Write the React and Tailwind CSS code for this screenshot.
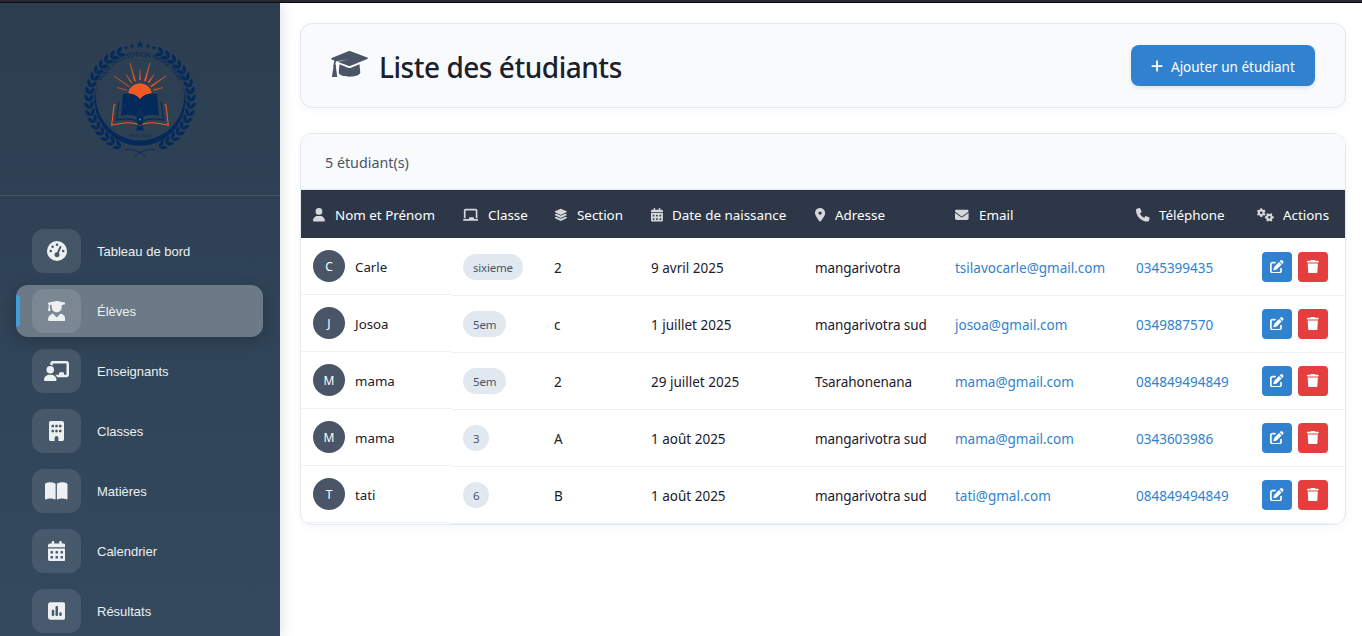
import {
  FaBookOpen, FaBuilding, FaCalendarDays, FaChalkboard, FaChalkboardUser, FaEnvelope, FaGaugeHigh,
  FaGears, FaLayerGroup, FaLocationDot, FaPenToSquare, FaPhone, FaPlus,
  FaSquarePollVertical, FaTrash, FaUser, FaUserGraduate,
} from "react-icons/fa6";

const NAVY = "#042a5c";
const ORANGE = "#f15a24";

const rad = (deg) => (deg * Math.PI) / 180;

function Laurel() {
  const leaf = "M2.5 .3C-.5 .8-4-.8-4.8-4C-1-4.8 2.2-2.8 2.5 .3Z";
  const leaves = [];
  for (let i = 0; i < 17; i++) {
    const a = 24 + i * 8.2;
    const cx = 140 + 51.5 * Math.sin(rad(a));
    const cy = 99.5 - 51.5 * Math.cos(rad(a));
    leaves.push(
      <g key={i} transform={`translate(${cx} ${cy}) rotate(${a})`}>
        <path d={leaf} />
        <path d={leaf} transform="translate(0 .8) scale(1 -1)" />
      </g>
    );
  }
  return <g>{leaves}</g>;
}

function Logo() {
  const star = "M0-3.3L.9-1.1L3.2-1L1.4.5L2 2.8L0 1.5L-2 2.8L-1.4.5L-3.2-1L-.9-1.1Z";
  const rays = [
    [-10, 63, -5, 81], [10, 63, 5, 81], [-26.5, 75.5, -11, 86.5], [26.5, 75.5, 11, 86.5],
    [-14, 74.5, -8.5, 82.5], [14, 74.5, 8.5, 82.5], [-23, 87.5, -14, 90], [23, 87.5, 14, 90],
  ];
  return (
    <svg width="120" height="126" viewBox="80 36 120 126" fill={NAVY}>
      <Laurel />
      <g transform="translate(280 0) scale(-1 1)"><Laurel /></g>
      <path d={star} transform="translate(140 44.6) scale(1.1)" />
      {[[126, 47.8, 0.65], [132, 46, 0.75], [148, 46, 0.75], [154, 47.8, 0.65]].map(([x, y, s]) => (
        <path key={x} d={star} transform={`translate(${x} ${y}) scale(${s})`} />
      ))}
      <path d="M97.5 84A45.5 45.5 0 1 0 182.5 84A44.2 44.2 0 1 1 97.5 84Z" />
      <path d="M124 150C133 149 140 151 146 157M156 150C147 149 140 151 134 157" fill="none" stroke={NAVY} strokeWidth=".9" />
      <path id="seal-arc" d="M97.6 99A42.4 42.4 0 0 1 182.4 99" fill="none" />
      <text fontFamily="Lato, sans-serif" fontSize="6.4" fontWeight="600" textAnchor="middle">
        <textPath href="#seal-arc" startOffset="50%">YOUR INSTITUTION NAME HERE</textPath>
      </text>
      <g fill={ORANGE} stroke={ORANGE}>
        <path strokeWidth=".3" d="M140 69.5L139.4 80H140.6Z" />
        {rays.map(([x1, y1, x2, y2]) => (
          <path key={x1} strokeWidth=".4" d={`M${140 + x1} ${y1}L${140 + x2 - 0.7} ${y2 - 0.3}L${140 + x2 + 0.7} ${y2 + 0.3}Z`} />
        ))}
        <path stroke="none" d="M128.3 92.5A12 12 0 0 1 151.7 92.5L149 96L140 99.5L131 96Z" />
        <path fill="none" strokeWidth="1.1" d="M115.5 104.5L114 105.2L111.7 125.3Q131 120 140 125.5Q149 120 168.3 125.3L166 105.2L164.5 104.5" />
      </g>
      <path d="M123 94Q134 92 140 99Q146 92 157 94L159 115.5Q147 113 140 119Q133 113 121 115.5Z" />
      <path d="M119 101.5L116.5 119.8Q133 117 139 123M161 101.5L163.5 119.8Q147 117 141 123" fill="none" stroke={NAVY} strokeWidth="1.2" />
      <path d="M140 109L136 119L138 125H142L144 119Z" stroke="#2d4154" strokeWidth=".5" />
      <path d="M136.8 125.5H143.2V127H142.5L144.2 130.5H135.8L137.5 127H136.8Z" />
      <circle cx="140" cy="119.5" r="1" fill="#6d7f91" />
      <text x="140" y="136.8" textAnchor="middle" fontFamily="Lato, sans-serif" fontSize="4">ESTD: 2000</text>
    </svg>
  );
}

function GraduationCap() {
  return (
    <svg width="37" height="26" viewBox="0 0 37 26" fill="#4a5568" className="mb-[3px]">
      <path d="M17.3.3Q18.5-.1 19.700.3L36.300 6.500Q37.500 7.200 36.300 7.900L19.700 14.800Q18.500 15.200 17.300 14.800L6.500 10.800L18.300 8.300L5.500 10.200C4.600 11 4.400 12 4.500 13.400Q5.500 14.500 4.800 15.800L6.200 25.200Q6.200 26 5.400 26H1.600Q.8 26 1 25.200L2.500 15.800Q1.700 14.500 2.700 13.400Q2.700 11.500 3.500 9.800L.7 8.500Q-.4 7.700.7 6.900Z" />
      <path d="M8.500 13.300L17 16.700Q18.500 17.200 20 16.700L28.500 13.300L29.300 21.800C27.500 27 9.500 27 7.700 21.800Z" />
    </svg>
  );
}

const nav = [
  { label: "Tableau de bord", Icon: FaGaugeHigh, size: "w-5" },
  { label: "Élèves", Icon: FaUserGraduate, size: "w-[17.5px]", active: true },
  { label: "Enseignants", Icon: FaChalkboardUser, size: "w-[25px]" },
  { label: "Classes", Icon: FaBuilding, size: "w-[15px]" },
  { label: "Matières", Icon: FaBookOpen, size: "w-[22.5px]" },
  { label: "Calendrier", Icon: FaCalendarDays, size: "w-[17.5px]" },
  { label: "Résultats", Icon: FaSquarePollVertical, size: "w-[17.5px]" },
];

const columns = [
  { label: "Nom et Prénom", Icon: FaUser, box: "w-[22px]", size: "w-[11.9px]" },
  { label: "Classe", Icon: FaChalkboard, box: "w-[25px]", size: "w-[15.3px]" },
  { label: "Section", Icon: FaLayerGroup, box: "w-[23px]", size: "w-[13.600px]" },
  { label: "Date de naissance", Icon: FaCalendarDays, box: "w-[21px]", size: "w-[11.9px]" },
  { label: "Adresse", Icon: FaLocationDot, box: "w-[20px]", size: "w-[10.2px]" },
  { label: "Email", Icon: FaEnvelope, box: "w-[24px]", size: "w-[13.6px]" },
  { label: "Téléphone", Icon: FaPhone, box: "w-[23px]", size: "w-[13.6px]" },
  { label: "Actions", Icon: FaGears, box: "w-[26px]", size: "w-[17px]" },
];

const students = [
  ["Carle", "sixieme", "2", "9 avril 2025", "mangarivotra", "tsilavocarle@gmail.com", "0345399435"],
  ["Josoa", "5em", "c", "1 juillet 2025", "mangarivotra sud", "josoa@gmail.com", "0349887570"],
  ["mama", "5em", "2", "29 juillet 2025", "Tsarahonenana", "mama@gmail.com", "084849494849"],
  ["mama", "3", "A", "1 août 2025", "mangarivotra sud", "mama@gmail.com", "0343603986"],
  ["tati", "6", "B", "1 août 2025", "mangarivotra sud", "tati@gmal.com", "084849494849"],
];

const grid = "grid grid-cols-[150px_91px_97px_164px_140px_181px_121px_100px]";

function Cell({ children, className = "" }) {
  return (
    <div className={`mt-px -mb-px flex h-[57px] items-center border-b border-[#edf2f7] pl-3 ${className}`}>
      {children}
    </div>
  );
}

export default function App() {
  return (
    <div className="flex h-[636px] w-full flex-col overflow-hidden bg-white font-['Noto_Sans','Open_Sans',sans-serif] text-[#1a202c]">
      <div className="h-[3px] shrink-0 border-b border-[#0c0c0d] bg-[#2b2a33]" />
      <div className="flex min-h-0 flex-1">
        <aside className="z-10 flex w-[280px] shrink-0 flex-col bg-linear-to-b from-[#2c3e50] to-[#34495e] font-['Liberation_Sans',Arial,sans-serif] shadow-[2px_0_12px_rgba(0,0,0,0.12)]">
          <div className="flex h-[193px] shrink-0 justify-center border-b border-white/10 pt-[33px]">
            <Logo />
          </div>
          <nav className="flex flex-col gap-2 pt-[29px] pr-[17px] pl-4">
            {nav.map(({ label, Icon, size, active }) => (
              <div
                key={label}
                className={`flex h-[52px] shrink-0 items-center rounded-xl ${active ? "overflow-hidden bg-[#6c7a87] shadow-[0_4px_15px_rgba(0,0,0,0.2)]" : ""}`}
              >
                <div className={`h-8 w-1 rounded-r ${active ? "bg-[#3f9fdc]" : ""}`} />
                <div className="ml-3 flex h-11 w-[49px] items-center justify-center rounded-xl bg-white/10 text-[#ecf0f1]">
                  <Icon className={`h-5 ${size}`} />
                </div>
                <span className="ml-4 pt-px text-[13px] font-medium text-[#ecf0f1]">{label}</span>
              </div>
            ))}
          </nav>
        </aside>

        <main className="flex-1 px-5 pt-5 pr-4">
          <header className="flex h-[85px] items-center justify-between rounded-xl border border-[#e2e8f0] bg-[#f8fafc] px-[30px] shadow-[0_2px_8px_rgba(0,0,0,0.04)]">
            <div className="flex items-center">
              <GraduationCap />
              <h1 className="ml-[11px] pt-[3px] text-[28px] font-medium tracking-[-0.47px]">Liste des étudiants</h1>
            </div>
            <button className="flex h-[41px] w-[184px] items-center rounded-lg bg-[#3182ce] pl-[19px] text-[13.5px] text-white shadow-[0_2px_4px_rgba(0,0,0,0.1)]">
              <FaPlus className="mt-px size-3.5" />
              <span className="ml-[7px] pt-[3px]">Ajouter un étudiant</span>
            </button>
          </header>

          <section className="mt-[25px] overflow-hidden rounded-xl border border-[#e2e8f0] bg-white shadow-[0_2px_8px_rgba(0,0,0,0.04)]">
            <div className="flex h-14 items-center border-b border-[#e2e8f0] bg-[#f8fafc] pt-0.5 pl-6 text-[14.3px] text-[#4a5568]">
              <span>5 étudiant(s)</span>
            </div>
            <div className={`${grid} h-12 bg-[#2d3748] text-[13.4px] text-white`}>
              {columns.map(({ label, Icon, box, size }) => (
                <div key={label} className="flex items-center pt-0.5 pl-3 whitespace-nowrap">
                  <div className={`${box} shrink-0 opacity-80`}><Icon className={`h-[13.6px] ${size}`} /></div>
                  <span className="pt-px">{label}</span>
                </div>
              ))}
            </div>
            <div className="pb-px text-[13.5px]">
              {students.map(([name, cls, sec, date, address, mail, phone], i) => (
                <div key={i} className={grid}>
                  <div className="flex h-[57px] items-center border-b border-[#edf2f7] pl-3">
                    <div className="flex size-8 items-center justify-center rounded-full bg-[#4a5568] pt-px text-[12px] text-white">
                      {name[0].toUpperCase()}
                    </div>
                    <span className="ml-2.5 pt-[3px] text-[13.3px]">{name}</span>
                  </div>
                  <Cell>
                    <span className="flex h-[26px] items-center rounded-full bg-[#e2e8f0] px-2.5 pt-0.5 text-[11.5px] tracking-[-0.2px] text-[#4a5568]">{cls}</span>
                  </Cell>
                  <Cell className="pt-[3px]">{sec}</Cell>
                  <Cell className="pt-[3px]">{date}</Cell>
                  <Cell className="pt-[3px] tracking-[-0.07px]">{address}</Cell>
                  <Cell className="pt-[3px] text-[#3182ce]">{mail}</Cell>
                  <Cell className="pt-[3px] text-[#3182ce]">{phone}</Cell>
                  <Cell className="gap-1.5 text-white">
                    <button className="ml-[5px] flex size-[30px] items-center justify-center rounded bg-[#3182ce] pb-px"><FaPenToSquare size={13.6} /></button>
                    <button className="flex size-[30px] items-center justify-center rounded bg-[#e53e3e] pb-px"><FaTrash size={13.6} /></button>
                  </Cell>
                </div>
              ))}
            </div>
          </section>
        </main>
      </div>
    </div>
  );
}
